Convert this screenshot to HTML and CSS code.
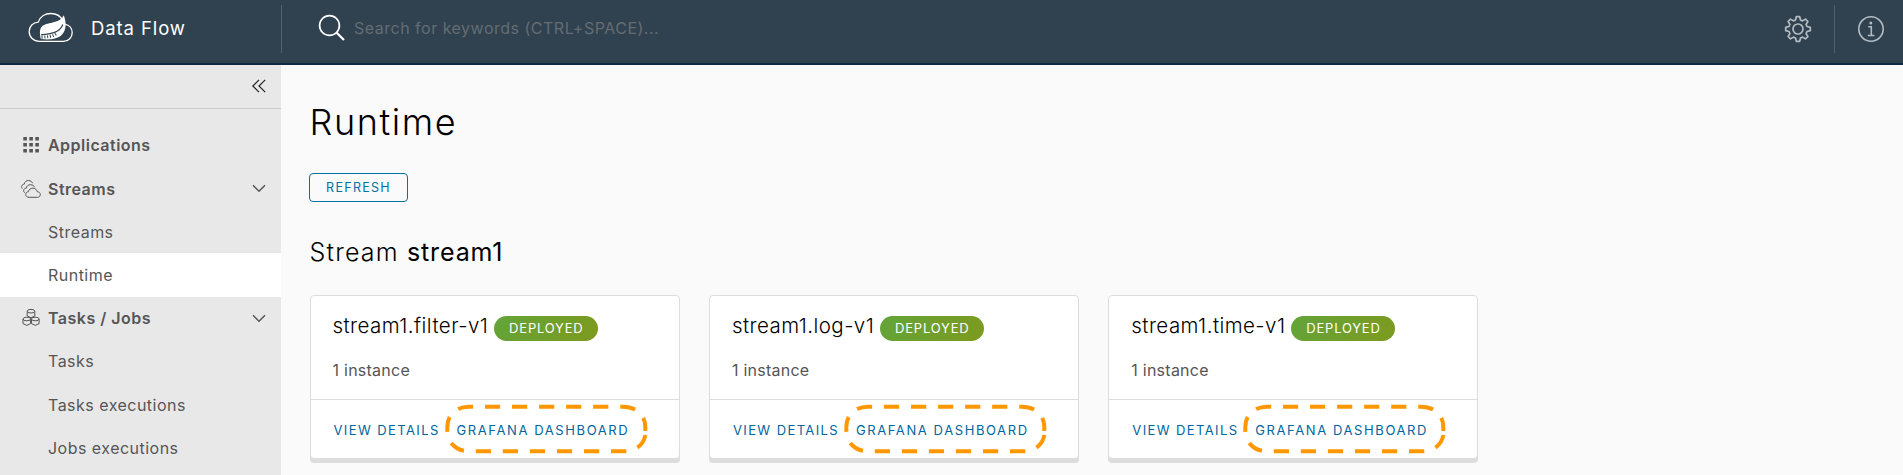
FILE: index.html
```html
<!DOCTYPE html>
<html lang="en">
<head>
<meta charset="utf-8">
<title>Data Flow</title>
<link rel="stylesheet" href="styles.css">
</head>
<body>
<svg class="defs" width="0" height="0">
  <symbol id="chevron" viewBox="0 0 14 9"><path d="M1 1.2 7 7.2 13 1.2" fill="none" stroke="currentColor" stroke-width="1.5"/></symbol>
  <symbol id="ring" viewBox="0 0 204 50"><path d="M200.3 31C199 40 191 47.3 180 47.3H24C11 47.3 2.3 38 2.3 27V23C2.3 11 11 2.700 24 2.700H178C191 2.700 200.300 11 200.300 23V27" fill="none" stroke="#ff9800" stroke-width="4" stroke-dasharray="15.200 11.850"/></symbol>
</svg>
<header class="header">
  <div class="brand">
    <svg class="logo" width="46" height="32" viewBox="0 0 46 32">
      <path d="M11.500 29.300C5.500 29.300 1.200 25 1.200 19.700C1.200 14.200 5 10.500 10.200 10.100C12 4.800 17 1.500 22.800 1.500C28.200 1.500 32.700 4.200 34.800 8.600C35.800 10 36.600 11.200 37 12.300C41.500 13 44.200 16.500 44.200 20.600C44.200 25.500 40.700 29.300 35.500 29.300Z" fill="none" stroke="#fff" stroke-width="1.300"/>
      <path d="M35.800 3.200C38.500 10.500 38.300 17.500 34.500 22C29.500 28 20 27.800 12.800 27C12 23 11 18.500 13.500 15C18 9.300 31.500 12.500 35.800 3.200Z" fill="#fff"/>
      <path d="M34.800 12.500C32 20.500 23 22.200 13 22.800" fill="none" stroke="#304250" stroke-width="1.200"/>
      <path d="M13.500 25.200C19 25.200 24 24.500 28 22" fill="none" stroke="#304250" stroke-width="3" stroke-dasharray="1 1.800"/>
    </svg>
    <span class="brand-name">Data Flow</span>
  </div>
  <div class="search">
    <svg width="28" height="28" viewBox="0 0 28 28" fill="none" stroke="#fff"><circle cx="11.500" cy="11.500" r="9.900" stroke-width="1.700"/><path d="M18.500 18.500 26 26" stroke-width="2.200"/></svg>
    <span class="search-text">Search for keywords (CTRL+SPACE)...</span>
  </div>
  <div class="action settings">
    <svg width="28" height="28" viewBox="0 0 28 28" fill="none" stroke="#b3bbc1" stroke-width="1.700" stroke-linejoin="round"><circle cx="14" cy="14" r="5"/><path d="M12.300 1.700H15.700L16.500 5L18.600 5.900L21.500 4.100L23.900 6.500L22.100 9.400L23 11.500L26.300 12.300V15.700L23 16.500L22.100 18.600L23.900 21.500L21.500 23.900L18.600 22.100L16.500 23L15.700 26.300H12.300L11.500 23L9.400 22.100L6.500 23.900L4.100 21.500L5.900 18.600L5 16.500L1.700 15.700V12.300L5 11.500L5.900 9.400L4.100 6.500L6.500 4.100L9.400 5.900L11.500 5Z"/></svg>
  </div>
  <div class="action info">
    <svg width="28" height="28" viewBox="0 0 28 28" fill="none" stroke="#b3bbc1" stroke-width="1.600"><circle cx="14" cy="14" r="12.200"/><circle cx="13.800" cy="8" r="1.500" fill="#b3bbc1" stroke="none"/><path d="M11.300 11.800H14.300V20.500M10.800 20.500H17.400"/></svg>
  </div>
</header>
<div class="body">
  <nav class="sidebar">
    <div class="collapse"><svg width="14" height="14" viewBox="0 0 14 14" fill="none" stroke="#222" stroke-width="1.200"><path d="M7 .8.800 7 7 13.200M13.200.8 7 7l6.200 6.200"/></svg></div>
    <div class="items">
      <div class="item group">
        <svg class="icon" width="20" height="20" viewBox="0 0 20 20" fill="#555"><path d="M2.300 2h3.600v3.600H2.300zM8.300 2h3.600v3.600H8.300zM14.300 2h3.600v3.600h-3.600zM2.300 8h3.600v3.600H2.300zM8.300 8h3.600v3.600H8.300zM14.300 8h3.600v3.600h-3.600zM2.300 14h3.600v3.600H2.300zM8.300 14h3.600v3.600H8.300zM14.300 14h3.600v3.600h-3.600z"/></svg>
        <span class="label">Applications</span>
      </div>
      <div class="item group">
        <svg class="icon" width="20" height="20" viewBox="0 0 20 20" fill="none" stroke="#555" stroke-width="1"><path d="M8 18.300C5.800 18.300 4.700 17 4.700 15.400C4.700 13.800 5.800 12.800 7.400 12.700C8 10.400 9.700 9.200 11.900 9.200C14.200 9.200 15.800 10.600 16.200 12.700C18.100 12.800 19.300 13.900 19.300 15.600C19.300 17.200 18.100 18.300 16.400 18.300Z"/><path d="M3.800 13.800C1.800 12.500 2.500 9.200 5.200 9.200C5.800 6.800 7.500 5.500 9.800 5.700C11.600 5.800 13 6.800 13.600 8.300"/><path d="M1.300 9.600C-.3 8 .8 5.300 3.200 5.200C3.800 2.600 5.500 1.400 7.700 1.500C9.600 1.600 11 2.600 11.500 4.200"/></svg>
        <span class="label">Streams</span>
        <svg class="chev" width="14" height="9"><use href="#chevron"/></svg>
      </div>
      <div class="item sub"><span>Streams</span></div>
      <div class="item sub active"><span>Runtime</span></div>
      <div class="item group">
        <svg class="icon" width="20" height="20" viewBox="0 0 20 20" fill="none" stroke="#555" stroke-width="1"><path d="M6.200 3.400V8L10 9.700 13.800 8V3.400M2 11V15.600L5.800 17.400 9.600 15.600V11M10.500 11V15.600L14.300 17.400 18.100 15.600V11"/><ellipse cx="10" cy="3.200" rx="3.800" ry="1.800"/><ellipse cx="5.800" cy="11" rx="3.800" ry="1.800"/><ellipse cx="14.300" cy="11" rx="3.800" ry="1.800"/></svg>
        <span class="label">Tasks / Jobs</span>
        <svg class="chev" width="14" height="9"><use href="#chevron"/></svg>
      </div>
      <div class="item sub"><span>Tasks</span></div>
      <div class="item sub"><span>Tasks executions</span></div>
      <div class="item sub"><span>Jobs executions</span></div>
    </div>
  </nav>
  <main class="main">
    <h1 class="title">Runtime</h1>
    <button class="refresh">REFRESH</button>
    <h2 class="stream">Stream <span class="stream-name">stream1</span></h2>
    <div class="cards">
      <section class="card">
        <div class="card-body">
          <div class="card-head"><span class="card-name">stream1.filter-v1</span><span class="badge">DEPLOYED</span></div>
          <div class="instances">1 instance</div>
        </div>
        <div class="card-foot"><a class="link view">VIEW DETAILS</a><a class="link dashboard">GRAFANA DASHBOARD</a><svg class="ring" width="204" height="50"><use href="#ring"/></svg></div>
      </section>
      <section class="card">
        <div class="card-body">
          <div class="card-head"><span class="card-name">stream1.log-v1</span><span class="badge">DEPLOYED</span></div>
          <div class="instances">1 instance</div>
        </div>
        <div class="card-foot"><a class="link view">VIEW DETAILS</a><a class="link dashboard">GRAFANA DASHBOARD</a><svg class="ring" width="204" height="50"><use href="#ring"/></svg></div>
      </section>
      <section class="card">
        <div class="card-body">
          <div class="card-head"><span class="card-name">stream1.time-v1</span><span class="badge">DEPLOYED</span></div>
          <div class="instances">1 instance</div>
        </div>
        <div class="card-foot"><a class="link view">VIEW DETAILS</a><a class="link dashboard">GRAFANA DASHBOARD</a><svg class="ring" width="204" height="50"><use href="#ring"/></svg></div>
      </section>
    </div>
  </main>
</div>
</body>
</html>
```
FILE: styles.css
```css
* { box-sizing: border-box; }
body {
  margin: 0;
  height: 475px;
  overflow: hidden;
  display: flex;
  flex-direction: column;
  font-family: Inter, "Open Sans", sans-serif;
  font-size: 16px;
  color: #565656;
  background: #fafafa;
}
.defs { position: absolute; }
svg { display: block; flex: none; }

.header {
  flex: none;
  display: flex;
  align-items: center;
  height: 65px;
  padding-bottom: 7px;
  background: #304250;
  border-bottom: 2px solid #0f2a40;
}
.brand {
  display: flex;
  align-items: center;
  width: 282px;
  height: 48px;
  margin-top: 1px;
  padding-left: 28px;
  border-right: 1px solid #50606c;
}
.logo { margin-top: -1px; }
.brand-name {
  margin: -1px 0 0 17px;
  font-size: 18.500px;
  color: #fff;
  letter-spacing: 0.900px;
}
.search {
  flex: 1;
  display: flex;
  align-items: center;
  padding-left: 36px;
}
.search-text {
  margin-left: 8px;
  font-size: 16px;
  color: #646c72;
  letter-spacing: 0.500px;
}
.action {
  display: flex;
  align-items: center;
  justify-content: center;
  width: 68px;
  height: 48px;
  margin-top: 1px;
}
.info { padding-left: 3px; }
.settings {
  width: 74px;
  border-right: 1px solid #50606c;
}

.body { flex: 1; display: flex; min-height: 0; }
.sidebar { flex: none; width: 281px; background: #e8e8e8; }
.collapse {
  display: flex;
  align-items: center;
  justify-content: flex-end;
  height: 44px;
  padding: 0 15px 2px 0;
  border-bottom: 1px solid #ccc;
}
.items { padding-top: 14.900px; }
.item {
  display: flex;
  align-items: center;
  height: 43.200px;
  padding: 0 15px 0 21px;
  letter-spacing: 0.480px;
}
.group { color: #565656; font-weight: 600; }
.label { flex: 1; margin-left: 7px; }
.sub { padding-left: 48px; }
.active { background: #fff; }

.main { flex: 1; padding: 33px 0 0 28.500px; }
.title {
  margin: 0;
  font-size: 36px;
  line-height: 48px;
  font-weight: 300;
  letter-spacing: 1.600px;
  color: #000;
}
.refresh {
  display: block;
  width: 99px;
  height: 29px;
  margin: 27px 0 0 -0.500px;
  padding: 0;
  border: 1px solid #0072a3;
  border-radius: 4px;
  background: transparent;
  color: #0072a3;
  font: 400 12.500px Inter, sans-serif;
  letter-spacing: 1.300px;
}
.stream {
  margin: 34px 0 0;
  font-size: 25px;
  line-height: 32px;
  font-weight: 300;
  letter-spacing: 1.200px;
  color: #000;
}
.stream-name { font-weight: 400; letter-spacing: 0.850px; }
.cards {
  display: grid;
  grid-template-columns: repeat(3, 370px);
  gap: 29.400px;
  margin-top: 27px;
}
.card {
  height: 164px;
  border: 1px solid #ddd;
  border-radius: 4px;
  background: #fff;
  box-shadow: 0 4px 0 #ddd;
}
.card-body { height: 104px; padding: 16px 22px 0; border-bottom: 1px solid #ddd; }
.card-head { display: flex; align-items: center; height: 30px; }
.card-name {
  margin-top: -3px;
  font-size: 20.500px;
  line-height: 26px;
  font-weight: 300;
  letter-spacing: 0.450px;
  color: #000;
}
.badge {
  width: 104px;
  height: 25px;
  margin-left: 6px;
  margin-top: 3px;
  border-radius: 13px;
  background: linear-gradient(120deg, #62a43a, #7e9a1e);
  color: #fff;
  font-size: 13px;
  line-height: 25px;
  letter-spacing: 0.800px;
  text-align: center;
}
.instances { margin-top: 18px; line-height: 20px; letter-spacing: 0.250px; }
.card-foot {
  position: relative;
  display: flex;
  align-items: center;
  height: 60px;
  padding-left: 23px;
}
.link { font-size: 13px; color: #0065a0; white-space: nowrap; }
.view { width: 123px; letter-spacing: 1.400px; }
.dashboard { letter-spacing: 1.600px; }
.ring { position: absolute; left: 134px; top: 4px; }
```
